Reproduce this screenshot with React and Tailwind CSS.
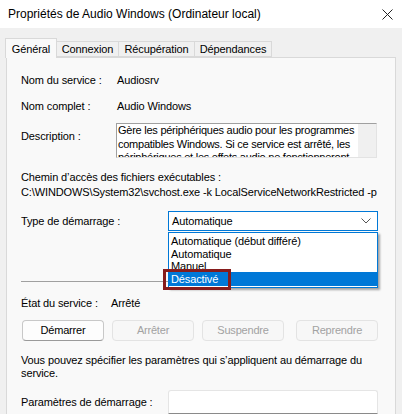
const font = { fontFamily: '"Liberation Sans", Arial, sans-serif' };

const Label = ({ children, className = "" }) => (
  <span className={`text-[11px] leading-[14px] tracking-[-0.12px] text-black whitespace-nowrap ${className}`}>{children}</span>
);

const Button = ({ children, disabled }) => (
  <div
    className={
      disabled
        ? "w-[82px] h-[21px] flex items-center justify-center rounded-[4px] border border-[#e3e3e3] bg-[#f7f7f7] text-[11px] tracking-[-0.2px] text-[#a2a2a2]"
        : "w-[82px] h-[21px] flex items-center justify-center rounded-[4px] border border-[#c8c8c8] border-b-[#9a9a9a] bg-[#fdfdfd] text-[11px] tracking-[-0.2px] text-black"
    }
  >
    {children}
  </div>
);

export default function App() {
  return (
    <div className="w-[402px] h-[414px] overflow-hidden bg-[#f0f0f0] relative" style={font}>
      {/* Title bar */}
      <div className="h-[28px] bg-white flex items-center justify-between pl-[8px] pr-[8px]">
        <span className="text-[12px] text-black">Propriétés de Audio Windows (Ordinateur local)</span>
        <svg width="11" height="11" viewBox="0 0 11 11" className="mr-[1px]">
          <path d="M0.5 0.5 L10.5 10.5 M10.5 0.5 L0.5 10.5" stroke="#222" strokeWidth="1" />
        </svg>
      </div>

      {/* Tabs */}
      <div className="flex items-end h-[29px] pl-[5px]">
        <div className="w-[52px] h-[20px] bg-[#f9f9f9] border border-b-0 border-[#d9d9d9] flex items-center justify-center relative top-[1px] z-10">
          <Label>Général</Label>
        </div>
        <div className="w-[62px] h-[16px] border border-l-0 border-[#d9d9d9] flex items-center justify-center"><Label>Connexion</Label></div>
        <div className="w-[76px] h-[16px] border border-l-0 border-[#d9d9d9] flex items-center justify-center"><Label>Récupération</Label></div>
        <div className="w-[77px] h-[16px] border border-l-0 border-[#d9d9d9] flex items-center justify-center"><Label>Dépendances</Label></div>
      </div>

      {/* Panel */}
      <div className="ml-[6px] w-[390px] h-[400px] bg-[#f9f9f9] border border-[#d9d9d9] pl-[14px] pr-[17px]">
        <div className="flex items-center h-[20px] mt-[12px]">
          <Label className="w-[96px]">Nom du service :</Label>
          <Label>Audiosrv</Label>
        </div>
        <div className="flex items-center h-[20px] mt-[6px]">
          <Label className="w-[96px]">Nom complet :</Label>
          <Label>Audio Windows</Label>
        </div>
        <div className="flex mt-[7px]">
          <Label className="w-[95px] pt-[6px]">Description :</Label>
          <div className="w-[261px] h-[35px] bg-white border border-[#a0a0a0] border-r-[#e3e3e3] border-b-[#e3e3e3] flex overflow-hidden">
            <div className="flex-1 pl-[1px] text-[11px] tracking-[-0.25px] leading-[13.5px] text-black overflow-hidden">
              Gère les périphériques audio pour les programmes compatibles Windows. Si ce service est arrêté, les
              périphériques et les effets audio ne fonctionneront pas correctement.
            </div>
            <div className="w-[18px] shrink-0 bg-[#f0f0f0]"></div>
          </div>
        </div>
        <div className="mt-[12px] h-[14px] flex items-center">
          <Label>Chemin d’accès des fichiers exécutables :</Label>
        </div>
        <div className="mt-[1px] h-[14px] flex items-center overflow-hidden">
          <Label className="tracking-[-0.05px]">C:\WINDOWS\System32\svchost.exe -k LocalServiceNetworkRestricted -p</Label>
        </div>
        <div className="flex items-center mt-[12px] h-[20px]">
          <Label className="w-[147px]">Type de démarrage :</Label>
          <div className="w-[210px] h-[20px] bg-white border border-[#0078d7] flex items-center justify-between pl-[3px] pr-[6px]">
            <Label>Automatique</Label>
            <svg width="10" height="6" viewBox="0 0 10 6">
              <path d="M0.5 0.5 L5 5 L9.5 0.5" fill="none" stroke="#555" strokeWidth="1" />
            </svg>
          </div>
        </div>
        <div className="mt-[50px] h-px bg-[#a0a0a0] w-[356px]"></div>
        <div className="flex items-center mt-[14px] h-[14px]">
          <Label className="w-[90px]">État du service :</Label>
          <Label>Arrêté</Label>
        </div>
        <div className="flex mt-[10px] gap-[8px] pl-[1px]">
          <Button>Démarrer</Button>
          <Button disabled>Arrêter</Button>
          <Button disabled>Suspendre</Button>
          <div className="ml-[4px]">
            <Button disabled>Reprendre</Button>
          </div>
        </div>
        <div className="mt-[13px] text-[11px] tracking-[-0.12px] leading-[12.5px] text-black w-[350px]">
          Vous pouvez spécifier les paramètres qui s’appliquent au démarrage du service.
        </div>
        <div className="flex items-center mt-[11px]">
          <Label className="w-[147px]">Paramètres de démarrage :</Label>
          <div className="w-[210px] h-[24px] bg-white border border-[#e5e5e5] border-b-[#8a8a8a] rounded-t-[3px]"></div>
        </div>
      </div>

      {/* Open dropdown list */}
      <div className="absolute left-[168px] top-[232px] w-[210px] h-[56px] bg-white border border-[#0078d7] shadow-[2px_2px_2px_rgba(0,0,0,0.35)] flex flex-col pt-[1px]">
        <div className="h-[13px] pl-[2px] flex items-center"><Label>Automatique (début différé)</Label></div>
        <div className="h-[13px] pl-[2px] flex items-center"><Label>Automatique</Label></div>
        <div className="h-[12px] pl-[2px] flex items-center"><Label>Manuel</Label></div>
        <div className="h-[14px] pl-[2px] bg-[#0078d7] flex items-center">
          <span className="text-[11px] tracking-[-0.12px] leading-[14px] text-white">Désactivé</span>
        </div>
      </div>

      {/* Highlight box */}
      <div className="absolute left-[163px] top-[269px] w-[68px] h-[21px] border-[3px] border-[#861c1c]"></div>
    </div>
  );
}
